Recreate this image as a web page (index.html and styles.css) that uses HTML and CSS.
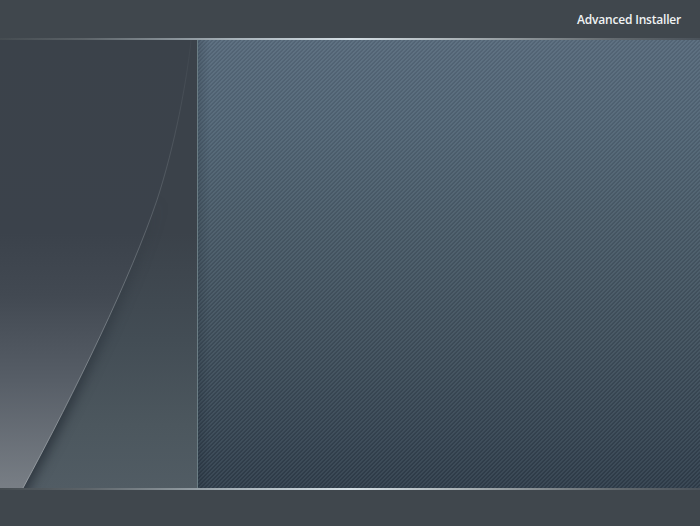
FILE: index.html
```html
<!DOCTYPE html>
<html lang="en">
<head>
<meta charset="utf-8">
<title>Advanced Installer</title>
<link rel="stylesheet" href="styles.css">
</head>
<body>
<div class="window">
  <header class="bar"><h1 class="title">Advanced Installer</h1></header>
  <div class="rule"></div>
  <main class="body">
    <aside class="side">
      <svg class="curve" viewBox="0 0 197 448" width="197" height="448" aria-hidden="true">
        <defs>
          <linearGradient id="fill" x1="0" y1="0" x2="0" y2="448" gradientUnits="userSpaceOnUse">
            <stop offset="0" stop-color="#3b424a"/>
            <stop offset=".43" stop-color="#3b424b"/>
            <stop offset=".57" stop-color="#424952"/>
            <stop offset=".76" stop-color="#575e67"/>
            <stop offset="1" stop-color="#787e85"/>
          </linearGradient>
          <linearGradient id="edge" x1="0" y1="0" x2="0" y2="448" gradientUnits="userSpaceOnUse">
            <stop offset="0" stop-color="#8b9399" stop-opacity=".05"/>
            <stop offset=".3" stop-color="#8b9399" stop-opacity=".28"/>
            <stop offset=".6" stop-color="#8b9399" stop-opacity=".6"/>
            <stop offset="1" stop-color="#a3a9ae" stop-opacity=".8"/>
          </linearGradient>
          <linearGradient id="shade" x1="0" y1="0" x2="0" y2="448" gradientUnits="userSpaceOnUse">
            <stop offset=".35" stop-color="#252d36" stop-opacity="0"/>
            <stop offset=".85" stop-color="#252d36" stop-opacity=".8"/>
          </linearGradient>
          <filter id="soft" x="-20%" y="-20%" width="140%" height="140%" color-interpolation-filters="sRGB"><feGaussianBlur stdDeviation="6"/></filter>
        </defs>
        <path d="M-20 0H191C187 40 175 105 157 160C131 237 76 350 23 448L12 470H-20Z" transform="translate(5 2)" fill="url(#shade)" filter="url(#soft)"/>
        <path d="M0 0H191C187 40 175 105 157 160C131 237 76 350 23 448H0Z" fill="url(#fill)"/>
        <path d="M191 0C187 40 175 105 157 160C131 237 76 350 23 448" fill="none" stroke="url(#edge)"/>
      </svg>
    </aside>
    <section class="content"></section>
  </main>
  <div class="rule"></div>
  <footer class="foot"></footer>
</div>
</body>
</html>
```
FILE: styles.css
```css
body {
  margin: 0;
}

.window {
  display: grid;
  grid-template-rows: 38px 2px 448px 2px 36px;
  width: 700px;
  height: 526px;
  background: #40474d;
}

.bar {
  display: flex;
  align-items: center;
  justify-content: flex-end;
  padding: 2px 19px 0 0;
}

.title {
  margin: 0;
  color: #f0f3f4;
  font: 600 12px/16px "Trebuchet MS", "Open Sans", sans-serif;
  letter-spacing: -.2px;
  white-space: nowrap;
}

.rule {
  background: linear-gradient(90deg, #454c51 0%, #5c6368 12%, #a9b4bb 34%, #d5dfe5 50%, #a9b1b5 66%, #62696e 88%, #4a525a 100%);
}

.body {
  display: grid;
  grid-template-columns: 197px 503px;
}

.side {
  overflow: hidden;
  background: linear-gradient(#3b424a 0%, #3b424a 43%, #434d55 67%, #4c575e 86%, #515c64 100%);
}

.curve {
  display: block;
}

.content {
  border-left: 1px solid #6b7d84;
  background:
    linear-gradient(90deg, rgba(30, 40, 50, .22), transparent 12px),
    repeating-linear-gradient(135deg, rgba(170, 195, 210, .09) 0 1.414px, rgba(15, 25, 35, .06) 1.414px 2.828px),
    linear-gradient(#57697a 0%, #516474 18%, #495a67 40%, #3f4e5a 67%, #34424f 90%, #2f3c49 100%);
}
```
